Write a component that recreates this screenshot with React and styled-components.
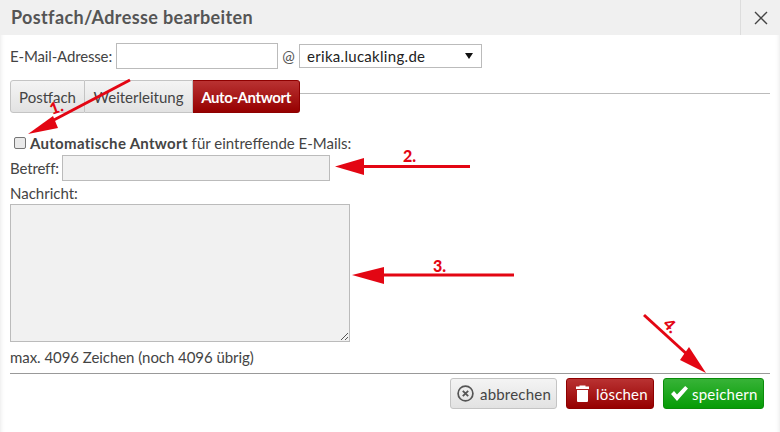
import React from "react";
import styled, { createGlobalStyle } from "styled-components";

const Global = createGlobalStyle`
  html, body {
    margin: 0;
    padding: 0;
    background: #fff;
  }
  body {
    font-family: "Lato", "Open Sans", sans-serif;
    font-size: 15px;
    color: #444;
  }
`;

const Dialog = styled.div`
  position: relative;
  width: 780px;
  height: 432px;
  overflow: hidden;
  background: #fff;
  box-shadow: inset 5px 0 5px -5px rgba(0, 0, 0, 0.12),
    inset -5px 0 5px -5px rgba(0, 0, 0, 0.12);
`;

const Header = styled.header`
  display: flex;
  align-items: stretch;
  justify-content: space-between;
  height: 35px;
  background: #f0f0f0;
`;

const Title = styled.h1`
  margin: 0;
  padding-left: 11px;
  font-size: 18px;
  line-height: 35px;
  font-weight: 700;
  letter-spacing: 0.36px;
  color: #555;
`;

const CloseButton = styled.button`
  display: flex;
  align-items: center;
  justify-content: center;
  width: 40px;
  padding: 0;
  border: 0;
  border-left: 1px solid #ddd;
  background: transparent;
`;

const Content = styled.div`
  display: flex;
  flex-direction: column;
  padding: 8px 10px 0;
`;

const AddressRow = styled.div`
  display: flex;
  align-items: center;
  height: 26px;
`;

const Label = styled.label`
  width: ${(p) => p.$width}px;
  line-height: 20px;
  white-space: nowrap;
  letter-spacing: -0.15px;
`;

const TextInput = styled.input`
  box-sizing: border-box;
  width: ${(p) => p.$width}px;
  height: 26px;
  padding: 0 6px;
  border: 1px solid #bbb;
  background: ${(p) => (p.disabled ? "#f1f1f1" : "#fff")};
`;

const At = styled.span`
  width: 21px;
  text-align: center;
  color: #555;
`;

const DomainSelect = styled.div`
  box-sizing: border-box;
  display: flex;
  align-items: center;
  justify-content: space-between;
  width: 183px;
  height: 24px;
  padding: 0 8px 0 7px;
  border: 1px solid #bbb;
  color: #222;
  letter-spacing: 0.3px;
`;

const Caret = styled.span`
  width: 0;
  height: 0;
  border-left: 4px solid transparent;
  border-right: 4px solid transparent;
  border-top: 6px solid #111;
`;

const TabBar = styled.div`
  display: flex;
  align-items: center;
  height: 33px;
  margin-top: 11px;
`;

const Tab = styled.div`
  box-sizing: border-box;
  display: flex;
  align-items: center;
  justify-content: center;
  width: ${(p) => p.$width}px;
  height: 33px;
  border: 1px solid ${(p) => (p.$active ? "#8e0000" : "#c4c4c4")};
  border-left-width: ${(p) => (p.$first ? 1 : 0)}px;
  border-radius: ${(p) => p.$radius};
  background: ${(p) =>
    p.$active
      ? "linear-gradient(#b93232, #960000)"
      : "linear-gradient(#f4f4f4, #e2e2e2)"};
  color: ${(p) => (p.$active ? "#fff" : "#444")};
  font-weight: ${(p) => (p.$active ? 700 : 400)};
  letter-spacing: ${(p) => (p.$active ? "-0.4px" : "0")};
`;

const TabLine = styled.div`
  flex: 1;
  height: 1px;
  margin-bottom: 6px;
  background: #bbb;
`;

const AutoReply = styled.div`
  display: flex;
  align-items: center;
  height: 20px;
  margin-top: 20px;
  padding-left: 4px;

  b {
    letter-spacing: 0.3px;
  }
`;

const Checkbox = styled.span`
  box-sizing: border-box;
  width: 12px;
  height: 12px;
  margin-right: 4px;
  border: 1px solid #767676;
  border-radius: 2px;
  background: #e9e9e9;
`;

const SubjectRow = styled.div`
  display: flex;
  align-items: center;
  height: 26px;
  margin-top: 2px;
`;

const MessageLabel = styled(Label)`
  margin-top: 2px;
  letter-spacing: 0;
`;

const MessageBox = styled.div`
  position: relative;
  box-sizing: border-box;
  width: 340px;
  height: 138px;
  margin-top: 1px;
  border: 1px solid #bbb;
  background: #f1f1f1;
`;

const Grip = styled.svg`
  position: absolute;
  right: 0;
  bottom: 0;
`;

const Counter = styled.div`
  height: 20px;
  margin-top: 5px;
  line-height: 20px;
  letter-spacing: -0.05px;
`;

const Footer = styled.footer`
  display: flex;
  justify-content: flex-end;
  gap: 9px;
  margin-top: 6px;
  padding: 4px 6px 0 0;
  border-top: 1px solid #999;
`;

const Button = styled.button`
  box-sizing: border-box;
  display: flex;
  align-items: center;
  gap: ${(p) => p.$gap}px;
  width: ${(p) => p.$width}px;
  height: 31px;
  padding: 0 0 0 ${(p) => p.$pad}px;
  border: 1px solid ${(p) => p.$border};
  border-radius: 3px;
  background: ${(p) => p.$bg};
  color: ${(p) => p.$color};
  font: inherit;
  letter-spacing: 0.2px;
`;

const Arrows = styled.svg`
  position: absolute;
  inset: 0;
  pointer-events: none;
`;

const ArrowText = styled.text`
  fill: #e30613;
  font-family: "Lato", sans-serif;
  font-size: 16px;
  font-weight: 900;
`;

export default function App() {
  return (
    <Dialog>
      <Global />
      <Header>
        <Title>Postfach/Adresse bearbeiten</Title>
        <CloseButton aria-label="Schließen">
          <svg width="14" height="14" viewBox="0 0 14 14">
            <path d="M1 1l12 12M13 1L1 13" stroke="#444" strokeWidth="1.4" fill="none" />
          </svg>
        </CloseButton>
      </Header>
      <Content>
        <AddressRow>
          <Label $width={106}>E-Mail-Adresse:</Label>
          <TextInput $width={162} />
          <At>@</At>
          <DomainSelect>
            erika.lucakling.de
            <Caret />
          </DomainSelect>
        </AddressRow>
        <TabBar>
          <Tab $first $width={75} $radius="3px 0 0 3px">Postfach</Tab>
          <Tab $width={108} $radius="0">Weiterleitung</Tab>
          <Tab $active $width={107} $radius="0 3px 3px 0">Auto-Antwort</Tab>
          <TabLine />
        </TabBar>
        <AutoReply>
          <Checkbox />
          <span>
            <b>Automatische Antwort</b> für eintreffende E-Mails:
          </span>
        </AutoReply>
        <SubjectRow>
          <Label $width={52}>Betreff:</Label>
          <TextInput $width={268} disabled />
        </SubjectRow>
        <MessageLabel>Nachricht:</MessageLabel>
        <MessageBox>
          <Grip width="9" height="9" viewBox="0 0 9 9">
            <path d="M1 8l7-7M5 8l3-3" stroke="#555" strokeWidth="1" fill="none" />
          </Grip>
        </MessageBox>
        <Counter>max. 4096 Zeichen (noch 4096 übrig)</Counter>
        <Footer>
          <Button $width={107} $pad={6} $gap={6} $border="#c4c4c4" $bg="linear-gradient(#f4f4f4, #e2e2e2)" $color="#444">
            <svg width="17" height="17" viewBox="0 0 17 17">
              <circle cx="8.5" cy="8.5" r="7.4" stroke="#555" strokeWidth="1.7" fill="none" />
              <path d="M5.8 5.8l5.4 5.4M11.2 5.8l-5.4 5.4" stroke="#555" strokeWidth="1.8" fill="none" />
            </svg>
            abbrechen
          </Button>
          <Button $width={88} $pad={9} $gap={7} $border="#8e0000" $bg="linear-gradient(#b93232, #960000)" $color="#fff">
            <svg width="13" height="17" viewBox="0 0 13 17">
              <path d="M3.5 1.5V0.5h6v1H13v2.5H0V1.5zM1 5h11v11a1 1 0 0 1-1 1H2a1 1 0 0 1-1-1z" fill="#fff" />
            </svg>
            löschen
          </Button>
          <Button $width={101} $pad={7} $gap={4} $border="#0a8c0a" $bg="linear-gradient(#37b337, #069c06)" $color="#fff">
            <svg width="17" height="15" viewBox="0 0 17 15">
              <path d="M0 8l3-3 3 3.6L14.2 0 17 2.6 6 15z" fill="#fff" />
            </svg>
            speichern
          </Button>
        </Footer>
      </Content>
      <Arrows width="780" height="432" viewBox="0 0 780 432">
        <g stroke="#e30613" strokeWidth="3" fill="none">
          <path d="M130 80L50 122" />
          <path d="M470 166.5H360" />
          <path d="M514 275H380" />
          <path d="M644 315L690 357" />
        </g>
        <g fill="#e30613">
          <path d="M28 134L53 116L58 128Z" />
          <path d="M335 166.5L364 158V175Z" />
          <path d="M352 275L384 267V284Z" />
          <path d="M706 373L689 347L680 360Z" />
        </g>
        <ArrowText transform="translate(52 115) rotate(-20)">1.</ArrowText>
        <ArrowText x="403" y="162">2.</ArrowText>
        <ArrowText x="433" y="272">3.</ArrowText>
        <ArrowText transform="translate(662 325) rotate(45)">4.</ArrowText>
      </Arrows>
    </Dialog>
  );
}
